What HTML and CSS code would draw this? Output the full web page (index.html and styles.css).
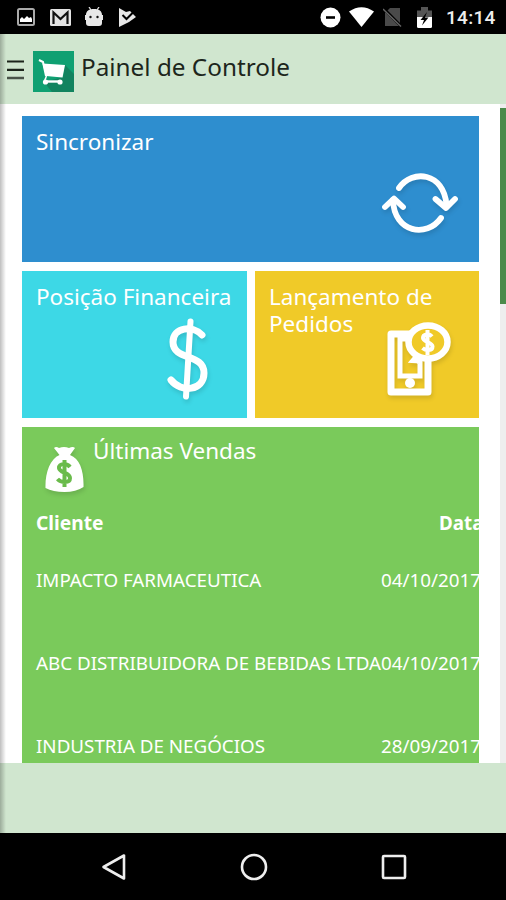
FILE: index.html
```
<!DOCTYPE html>
<html lang="pt-BR">
<head>
    <meta charset="UTF-8">
    <meta name="viewport" content="width=device-width, initial-scale=1.0">
    <title>Painel de Controle</title>
    <link rel="stylesheet" href="styles.css">
</head>
<body>

<div class="status-bar">
    <div class="status-left">
        <svg width="18" height="18" viewBox="0 0 18 18">
            <rect x="1" y="1" width="16" height="16" rx="1.5" fill="none" stroke="#aaa" stroke-width="2"/>
            <path d="M3 14v-3l2-2 2 2 3-3 2 2 2-1 1 2v3z" fill="#fff"/>
        </svg>
        <svg width="21" height="17" viewBox="0 0 21 17">
            <rect width="21" height="17" rx="1.5" fill="#e4e4e4"/>
            <path d="M3.5 15V3.5l7 6.5 7-6.5V15" fill="none" stroke="#111" stroke-width="2.2"/>
        </svg>
        <svg width="18" height="20" viewBox="0 0 18 20">
            <path d="M4 0l2 3M14 0l-2 3" stroke="#ddd" stroke-width="1.3"/>
            <path d="M1 8C1 4 4 2 9 2s8 2 8 6h1v5h-1v3q0 3-3 3H4q-3 0-3-3v-3H0V8z" fill="#e8e8e8"/>
            <circle cx="5.5" cy="10" r="1.2" fill="#111"/>
            <circle cx="12.5" cy="10" r="1.2" fill="#111"/>
        </svg>
        <svg width="18" height="19" viewBox="0 0 18 19">
            <path d="M1 0l7 4 4-1 6 6-7 5L1 19z" fill="#e8e8e8"/>
            <path d="M4.500 7l4 4L15 4.500" fill="none" stroke="#000" stroke-width="2"/>
        </svg>
    </div>
    <div class="status-right">
        <svg class="dnd" width="21" height="21" viewBox="0 0 21 21">
            <circle cx="10.5" cy="10.5" r="10" fill="#fff"/>
            <path d="M6 10.5h9" stroke="#000" stroke-width="2.6"/>
        </svg>
        <svg class="wifi" width="25" height="20" viewBox="0 0 25 20">
            <path d="M0 4.5Q12.500-4 25 4.500L12.500 20z" fill="#fff"/>
        </svg>
        <svg class="sim" width="19" height="20" viewBox="0 0 19 20">
            <path d="M2 6l5-5h10v18H2z" fill="#4a4a4a"/>
            <path d="M1 2l17 17" stroke="#000" stroke-width="3"/>
            <path d="M0 2l18 17.5" stroke="#666" stroke-width="1.4"/>
        </svg>
        <svg class="battery" width="15" height="21" viewBox="0 0 15 21">
            <path d="M0 3.500h4V0h7v3.500h4V10H0z" fill="#555"/>
            <path d="M0 10h15v9.500q0 1.500-1.500 1.500h-12Q0 21 0 19.500z" fill="#fff"/>
            <path d="M10 5l-6.500 8h3.500L5 18.500l6.500-8H8z" fill="#000"/>
        </svg>
        <span class="clock">14:14</span>
    </div>
</div>

<div class="app">
    <div class="header">
        <svg class="menu-icon" width="17" height="20" viewBox="0 0 17 20">
            <path d="M0 1.500h17M0 9.800h17" stroke="#1c241b" stroke-width="2.2"/>
            <path d="M0 18h17" stroke="#495348" stroke-width="2.500"/>
        </svg>
        <svg class="logo" width="41" height="41" viewBox="0 0 41 41">
            <rect width="41" height="41" fill="#0fa072"/>
            <path d="M32 14l9 9v18H19l-8-10 19-5z" fill="#12835f"/>
            <path d="M6 9l4 2 3 14" fill="none" stroke="#fff" stroke-width="2"/>
            <path d="M9.500 12.500L32 14l-2.500 12.500L13 25z" fill="#fff"/>
            <path d="M12 30.500h16" stroke="#fff" stroke-width="2.4"/>
            <path d="M13.500 25l-2 5" stroke="#fff" stroke-width="1.5"/>
            <circle cx="12.500" cy="31" r="2.600" fill="#fff"/>
            <circle cx="27" cy="31" r="2.600" fill="#fff"/>
        </svg>
        <h1>Painel de Controle</h1>
    </div>

    <div class="content">
        <div class="tiles">
            <div class="tile tile-sync">
                <h2>Sincronizar</h2>
                <svg class="tile-icon icon-sync" width="76" height="62" viewBox="0 0 76 62">
                    <g fill="none" stroke="#fff" stroke-width="5.8" stroke-linecap="round" stroke-linejoin="round">
                        <path d="M17 16C30-3 62 0 64.500 33"/>
                        <path d="M53.500 27l10.500 9 9-9"/>
                        <path d="M59 46C45 66 12 61 11 28"/>
                        <path d="M3 35l9-8.500 9 8.500"/>
                    </g>
                </svg>
            </div>
            <div class="tile tile-finance">
                <h2>Posição Financeira</h2>
                <svg class="tile-icon icon-money" width="42" height="82" viewBox="0 0 42 82">
                    <g fill="none" stroke="#fff" stroke-width="7" stroke-linecap="round">
                        <path d="M35 17C26 7 6 9 6 24C6 43 37 35 37 55C37 73 14 75 4 62"/>
                        <path d="M23.500 3.500l-4.500 75" stroke-width="6"/>
                    </g>
                </svg>
            </div>
            <div class="tile tile-orders">
                <h2>Lançamento de Pedidos</h2>
                <svg class="tile-icon icon-orders" width="65" height="75" viewBox="0 0 65 75">
                    <rect x="5" y="12" width="37" height="58" fill="none" stroke="#fff" stroke-width="7" stroke-linejoin="round"/>
                    <path d="M20 17h-6v37h20v-15l-7-.5 7-8" fill="none" stroke="#fff" stroke-width="5"/>
                    <circle cx="24" cy="61" r="5" fill="#fff"/>
                    <path d="M29 29l2 13 11-9z" fill="#fff"/>
                    <ellipse cx="42" cy="20" rx="19.500" ry="16.500" fill="#f0ca28" stroke="#fff" stroke-width="6.500"/>
                    <path d="M46 14.500C43 11 37 12 37 16S46.500 20 46.500 24.500S40 29 36.500 26M41.500 8v25" fill="none" stroke="#fff" stroke-width="4"/>
                </svg>
            </div>
            <div class="tile tile-sales">
                <div class="sales-title">
                    <svg class="icon-bag" width="39" height="46" viewBox="0 0 39 46">
                        <path d="M9 2q2-2 5 0 5-2 10 0 4-2 6 0l-5 7C35 13 39 25 38.500 41Q31 46 19.500 46T.500 42C0 27 5 13 14.500 9z" fill="#fff"/>
                        <path d="M25 21C22 17 13.500 17 14 22S25 26.500 25 32S16 37 12.500 33M19.500 14v27" fill="none" stroke="#6abb4b" stroke-width="4"/>
                    </svg>
                    <h2>Últimas Vendas</h2>
                </div>
                <table class="sales">
                    <tr>
                        <th>Cliente</th>
                        <th class="date">Data</th>
                    </tr>
                    <tr>
                        <td>IMPACTO FARMACEUTICA</td>
                        <td>04/10/2017</td>
                    </tr>
                    <tr>
                        <td>ABC DISTRIBUIDORA DE BEBIDAS LTDA</td>
                        <td>04/10/2017</td>
                    </tr>
                    <tr>
                        <td>INDUSTRIA DE NEGÓCIOS</td>
                        <td>28/09/2017</td>
                    </tr>
                </table>
            </div>
        </div>
        <div class="scrollbar"><div class="thumb"></div></div>
    </div>

    <div class="footer"></div>
</div>

<div class="nav-bar">
    <svg width="26" height="28" viewBox="0 0 26 28">
        <path d="M23 2.500v23L2.500 14z" fill="none" stroke="#eee" stroke-width="2.600" stroke-linejoin="round"/>
    </svg>
    <svg width="28" height="28" viewBox="0 0 28 28">
        <circle cx="14" cy="14" r="12" fill="none" stroke="#eee" stroke-width="2.600"/>
    </svg>
    <svg width="26" height="26" viewBox="0 0 26 26">
        <rect x="2" y="2" width="22" height="22" rx="1" fill="none" stroke="#eee" stroke-width="2.600"/>
    </svg>
</div>

</body>
</html>
```
FILE: styles.css
```
body {
    margin: 0;
    width: 506px;
    height: 900px;
    overflow: hidden;
    display: flex;
    flex-direction: column;
    font-family: "Noto Sans", sans-serif;
    background: #000;
}
svg {
    display: block;
    flex: none;
}
h1, h2 {
    margin: 0;
    font-weight: normal;
}
.status-bar {
    height: 34px;
    flex: none;
    display: flex;
    justify-content: space-between;
    box-sizing: border-box;
    padding: 0 10px 0 17px;
    background: #000;
    color: #eee;
}
.status-left, .status-right {
    display: flex;
    align-items: center;
}
.status-left {
    gap: 14.5px;
}
.wifi {
    margin-left: 8px;
}
.sim {
    margin-left: 9px;
}
.battery {
    margin-left: 15px;
}
.clock {
    width: 50px;
    margin-left: 14px;
    font-family: Roboto, sans-serif;
    font-size: 19px;
    font-weight: 500;
    letter-spacing: 0.3px;
    line-height: 34px;
    padding-top: 2px;
}
.app {
    position: relative;
    height: 799px;
    flex: none;
    background: #fff;
}
/* shadow cast by the closed drawer */
.app::after {
    content: "";
    position: absolute;
    top: 0;
    left: 0;
    width: 6px;
    height: 100%;
    background: linear-gradient(to right, rgba(0, 0, 0, 0.25), rgba(0, 0, 0, 0));
}
.header {
    height: 70px;
    display: flex;
    align-items: center;
    box-sizing: border-box;
    padding: 4px 0 0 7px;
    background: #d0e6cf;
}
.menu-icon {
    margin-top: -3px;
}
.logo {
    margin-left: 9px;
}
.header h1 {
    margin: -8px 0 0 7px;
    font-size: 24.3px;
    line-height: 32px;
    color: #1d261c;
    white-space: nowrap;
}
.content {
    height: 659px;
    display: flex;
    justify-content: space-between;
    overflow: hidden;
}
.tiles {
    width: 457px;
    margin: 12px 0 0 22px;
    display: grid;
    grid-template-columns: 225px 224px;
    grid-template-rows: 146px 147px 336px;
    gap: 9px 8px;
}
.tile {
    display: flex;
    flex-direction: column;
    box-sizing: border-box;
    padding: 12px 0 0 14px;
    overflow: hidden;
    color: #fff;
}
.tile h2 {
    font-size: 22.5px;
    line-height: 27px;
}
.tile-icon {
    align-self: flex-end;
    margin-top: auto;
    filter: drop-shadow(1px 3px 2px rgba(0, 0, 0, 0.12));
}
.tile-sync {
    grid-column: 1 / 3;
    background: #2e8ecf;
}
.icon-sync {
    margin: auto 21px 28px 0;
}
.tile-finance {
    background: #3dd8e6;
}
.icon-money {
    margin: auto 38px 18px 0;
}
.tile-orders {
    background: #f0ca28;
}
.tile-orders h2 {
    width: 180px;
}
.icon-orders {
    margin: -15px 28px 0 0;
}
.tile-sales {
    grid-column: 1 / 3;
    padding-top: 10px;
    background: #7aca5b;
}
.sales-title {
    height: 65px;
    display: flex;
}
.icon-bag {
    margin: 9px 9px 0 9px;
    filter: drop-shadow(1px 3px 2px rgba(0, 0, 0, 0.12));
}
.sales {
    border-collapse: collapse;
    table-layout: fixed;
    width: 460px;
    flex: none;
    font-size: 18.8px;
    line-height: 26px;
    white-space: nowrap;
}
.sales th, .sales td {
    height: 83px;
    padding: 0;
    text-align: left;
}
.sales th {
    height: 31px;
    padding-top: 15px;
}
.sales th:first-child {
    width: 345px;
    font-size: 19.2px;
}
.sales .date {
    padding-left: 58px;
}
.scrollbar {
    width: 6px;
    padding-top: 4px;
    background: #eee;
    box-sizing: border-box;
}
.thumb {
    height: 196px;
    background: #4b8b4b;
}
.footer {
    height: 70px;
    background: #d0e6cf;
}
.nav-bar {
    height: 67px;
    flex: none;
    display: flex;
    justify-content: space-between;
    align-items: center;
    box-sizing: border-box;
    padding: 0 99px 0 101px;
}
```
